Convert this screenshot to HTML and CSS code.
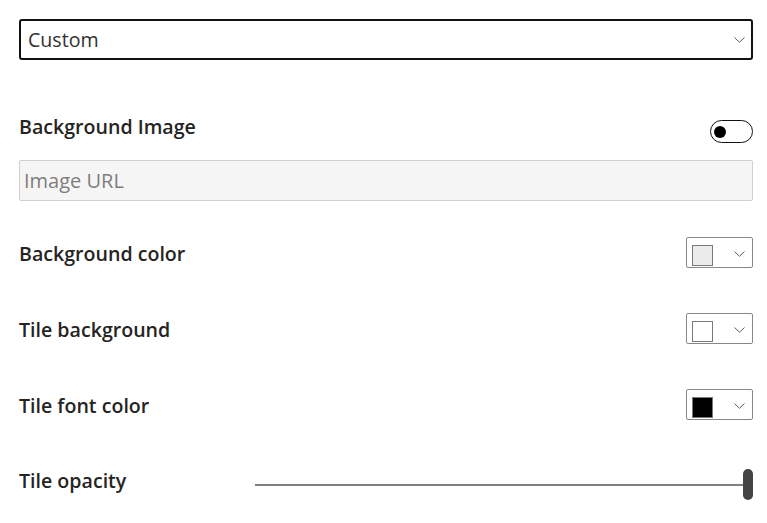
FILE: index.html
```html
<!DOCTYPE html>
<html>
<head>
<meta charset="utf-8">
<link rel="stylesheet" href="styles.css">
</head>
<body>
<div class="panel">
  <div class="select">
    <span class="select-text">Custom</span>
    <svg class="chev-lg" width="11" height="6" viewBox="0 0 11 6"><path d="M0.5 0.5 L5.5 5.2 L10.5 0.5" fill="none" stroke="#605e5c" stroke-width="1"/></svg>
  </div>

  <div class="row row-toggle">
    <span class="label">Background Image</span>
    <span class="toggle"><span class="knob"></span></span>
  </div>

  <div class="input"><span class="placeholder">Image URL</span></div>

  <div class="row row-color first">
    <span class="label">Background color</span>
    <span class="picker"><span class="swatch sw-gray"></span>
      <svg class="chev" width="11" height="6" viewBox="0 0 11 6"><path d="M0.5 0.5 L5.5 5.2 L10.5 0.5" fill="none" stroke="#605e5c" stroke-width="1"/></svg>
    </span>
  </div>

  <div class="row row-color">
    <span class="label">Tile background</span>
    <span class="picker"><span class="swatch sw-white"></span>
      <svg class="chev" width="11" height="6" viewBox="0 0 11 6"><path d="M0.5 0.5 L5.5 5.2 L10.5 0.5" fill="none" stroke="#605e5c" stroke-width="1"/></svg>
    </span>
  </div>

  <div class="row row-color">
    <span class="label">Tile font color</span>
    <span class="picker"><span class="swatch sw-black"></span>
      <svg class="chev" width="11" height="6" viewBox="0 0 11 6"><path d="M0.5 0.5 L5.5 5.2 L10.5 0.5" fill="none" stroke="#605e5c" stroke-width="1"/></svg>
    </span>
  </div>

  <div class="row row-slider">
    <span class="label slider-label">Tile opacity</span>
    <span class="slider"><span class="track"></span><span class="thumb"></span></span>
  </div>
</div>
</body>
</html>
```

FILE: styles.css
```css
html, body {
  margin: 0;
  padding: 0;
  background: #ffffff;
}

body {
  font-family: "Open Sans", "Noto Sans", sans-serif;
  color: #201f1e;
}

.panel {
  width: 734px;
  padding: 19px 0 0 19px;
  display: flex;
  flex-direction: column;
}

.select {
  box-sizing: border-box;
  height: 41px;
  border: 2px solid #111111;
  border-radius: 3px;
  display: flex;
  align-items: center;
  justify-content: space-between;
  padding: 0 6px 0 7px;
}

.select-text {
  font-size: 19.6px;
  color: #323130;
  line-height: 1;
  margin-top: 0;
}

.chev-lg {
  display: block;
}

.row {
  display: flex;
  align-items: center;
  justify-content: space-between;
}

.label {
  font-size: 19.6px;
  font-weight: 600;
  line-height: 1;
  color: #252423;
}

.row-toggle {
  margin-top: 60px;
  height: 23px;
}

.row-toggle .label {
  margin-top: -10px;
}

.toggle {
  box-sizing: border-box;
  width: 43px;
  height: 23px;
  border: 1.5px solid #111111;
  border-radius: 12px;
  display: flex;
  align-items: center;
  padding-left: 3px;
}

.knob {
  width: 12px;
  height: 12px;
  border-radius: 50%;
  background: #000000;
}

.input {
  box-sizing: border-box;
  margin-top: 17px;
  height: 41px;
  background: #f5f5f5;
  border: 1px solid #d2d0ce;
  border-radius: 2px;
  display: flex;
  align-items: center;
  padding-left: 4px;
}

.placeholder {
  font-size: 20px;
  color: #7f7d7b;
  line-height: 1;
  margin-top: 1px;
}

.row-color {
  margin-top: 45px;
  height: 31px;
}

.row-color.first {
  margin-top: 36px;
}

.row-color .label {
  margin-top: 3px;
}

.picker {
  box-sizing: border-box;
  width: 67px;
  height: 31px;
  border: 1px solid #8a8886;
  border-radius: 2px;
  display: flex;
  align-items: flex-start;
  padding: 7px 0 0 5px;
}

.swatch {
  box-sizing: border-box;
  width: 21px;
  height: 21px;
  border: 1px solid #7a7a7a;
}

.sw-gray { background: #ebebeb; }
.sw-white { background: #ffffff; }
.sw-black { background: #000000; }

.chev {
  display: block;
  margin: 6px 0 0 21px;
}

.row-slider {
  margin-top: 49px;
  height: 31px;
  justify-content: flex-start;
}

.slider-label {
  width: 236px;
  margin-top: -7px;
}

.slider {
  flex: 1;
  height: 31px;
  display: flex;
  align-items: center;
}

.track {
  flex: 1;
  height: 2px;
  background: #808080;
  margin-top: 1px;
}

.thumb {
  width: 10px;
  height: 31px;
  border-radius: 5px;
  background: #444444;
}
```
